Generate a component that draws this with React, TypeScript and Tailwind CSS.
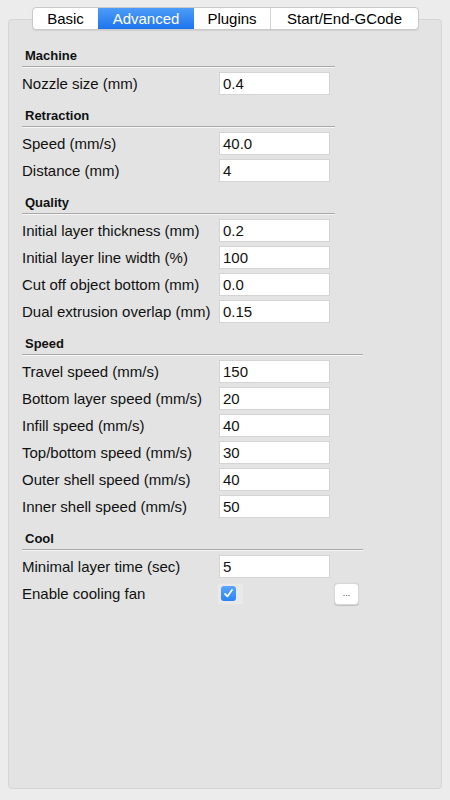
const font = { fontFamily: '"Liberation Sans", Arial, sans-serif' };

type Row = { label: string; value?: string; checkbox?: boolean };
type Section = { title: string; wide?: boolean; rows: Row[] };

const sections: Section[] = [
  { title: "Machine", rows: [{ label: "Nozzle size (mm)", value: "0.4" }] },
  {
    title: "Retraction",
    rows: [
      { label: "Speed (mm/s)", value: "40.0" },
      { label: "Distance (mm)", value: "4" },
    ],
  },
  {
    title: "Quality",
    rows: [
      { label: "Initial layer thickness (mm)", value: "0.2" },
      { label: "Initial layer line width (%)", value: "100" },
      { label: "Cut off object bottom (mm)", value: "0.0" },
      { label: "Dual extrusion overlap (mm)", value: "0.15" },
    ],
  },
  {
    title: "Speed",
    wide: true,
    rows: [
      { label: "Travel speed (mm/s)", value: "150" },
      { label: "Bottom layer speed (mm/s)", value: "20" },
      { label: "Infill speed (mm/s)", value: "40" },
      { label: "Top/bottom speed (mm/s)", value: "30" },
      { label: "Outer shell speed (mm/s)", value: "40" },
      { label: "Inner shell speed (mm/s)", value: "50" },
    ],
  },
  {
    title: "Cool",
    wide: true,
    rows: [
      { label: "Minimal layer time (sec)", value: "5" },
      { label: "Enable cooling fan", checkbox: true },
    ],
  },
];

const tabs = [
  { name: "Basic", w: "w-[65px]" },
  { name: "Advanced", w: "w-[96px]", active: true },
  { name: "Plugins", w: "w-[76px]" },
  { name: "Start/End-GCode", w: "w-[148px]" },
];

export default function App() {
  return (
    <div className="relative w-[450px] h-[800px] bg-[#ececec] text-black" style={font}>
      <div className="pt-[19px] pl-[8px]">
        <div className="w-[434px] h-[770px] rounded-[4px] border border-[#d6d6d6] bg-[#e3e3e3] pl-[13px] pt-[28px]">
          {sections.map((s, i) => (
            <div key={s.title} className={i > 0 ? "mt-[13px]" : ""}>
              <div className="h-4 leading-4 ml-[3px] text-[13px] font-bold text-[#111]">{s.title}</div>
              <div
                className={`mt-[2px] h-[2px] border-t border-[#a9a9a9] border-b border-b-[#f6f6f6] ${
                  s.wide ? "w-[341px]" : "w-[313px]"
                }`}
              />
              <div className="mt-[4px] flex flex-col gap-[4px]">
                {s.rows.map((r) => (
                  <div key={r.label} className="flex items-center h-[23px]">
                    <span className="w-[197px] text-[15px] leading-[23px] text-[#111] whitespace-nowrap">
                      {r.label}
                    </span>
                    {r.checkbox ? (
                      <>
                        <div className="w-[25px] h-[20px] bg-[#e9e9e9] flex items-center pl-[3px] -ml-[1px]">
                          <div className="w-[15px] h-[15px] rounded-[3px] bg-gradient-to-b from-[#5aa6fb] to-[#2a82f4] flex items-center justify-center">
                            <svg width="11" height="11" viewBox="0 0 11 11">
                              <path d="M2 5.8 L4.4 8.4 L9 2" fill="none" stroke="white" strokeWidth="1.7" strokeLinecap="round" strokeLinejoin="round" />
                            </svg>
                          </div>
                        </div>
                        <div className="ml-[91px] w-[25px] h-[22px] rounded-[4px] bg-white border border-[#d8d8d8] shadow-[0_0.5px_1px_rgba(0,0,0,0.15)] flex items-center justify-center text-[9px] leading-none text-[#444]">
                          ...
                        </div>
                      </>
                    ) : (
                      <div className="w-[111px] h-[23px] bg-white border border-[#d4d4d4] pl-[3px] text-[15px] leading-[22px] text-[#111]">
                        {r.value}
                      </div>
                    )}
                  </div>
                ))}
              </div>
            </div>
          ))}
        </div>
      </div>

      <div className="absolute left-[32px] top-[7px] flex h-[23px] rounded-[4px] border border-[#c9c9c9] bg-white shadow-[0_1px_1px_rgba(0,0,0,0.08)] overflow-hidden">
        {tabs.map((t, i) => (
          <div
            key={t.name}
            className={`${t.w} flex items-center justify-center text-[15px] leading-none ${
              t.active
                ? "bg-gradient-to-b from-[#4c9cf8] to-[#1c74ee] text-white"
                : "text-black"
            } ${i > 0 && !t.active && !tabs[i - 1].active ? "border-l border-[#d4d4d4]" : ""}`}
          >
            {t.name}
          </div>
        ))}
      </div>
    </div>
  );
}
